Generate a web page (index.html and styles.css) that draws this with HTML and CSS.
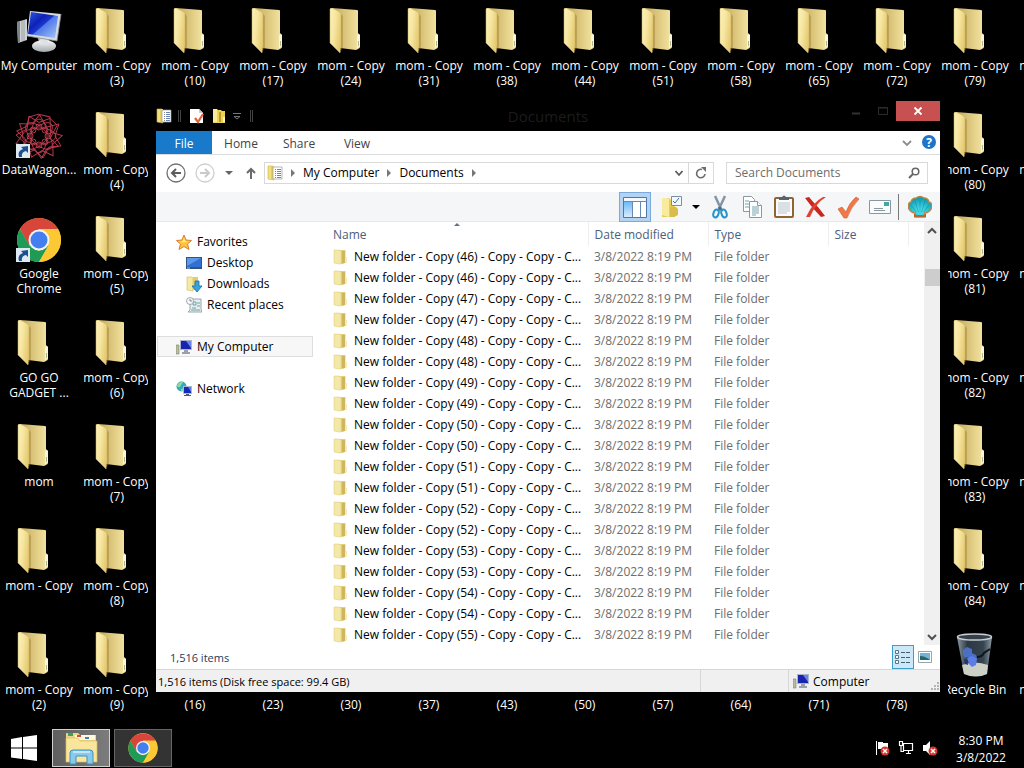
FILE: index.html
```html
<!DOCTYPE html>
<html lang="en">
<head>
  <meta charset="UTF-8">
  <meta name="viewport" content="width=device-width, initial-scale=1">
  <title>Documents</title>
  <link rel="stylesheet" href="styles.css">
</head>
<body>
  <!-- icon set -->
  <svg class="defs" width="0" height="0" aria-hidden="true">
    <defs>
      <linearGradient id="flap" x1="0" x2="1" y1="0" y2=".4"><stop offset="0" stop-color="#fbf1bd"/><stop offset=".5" stop-color="#f6e6a1"/><stop offset="1" stop-color="#e6cc74"/></linearGradient>
      <linearGradient id="back" x1="0" x2="1"><stop offset="0" stop-color="#c2a75a"/><stop offset=".5" stop-color="#dcc67c"/><stop offset="1" stop-color="#f5e6a6"/></linearGradient>
      <linearGradient id="screen" x1="0" x2="1" y1="0" y2="1"><stop offset="0" stop-color="#2f57dd"/><stop offset=".35" stop-color="#0e22b8"/><stop offset=".5" stop-color="#1c37cf"/><stop offset=".52" stop-color="#4f79e8"/><stop offset="1" stop-color="#a9c8fb"/></linearGradient>
      <linearGradient id="metal" x1="0" x2="0" y1="0" y2="1"><stop offset="0" stop-color="#fafafa"/><stop offset="1" stop-color="#a4a9ad"/></linearGradient>
      <linearGradient id="glass" x1="0" x2="1"><stop offset="0" stop-color="#8b99a4"/><stop offset=".3" stop-color="#2c3944"/><stop offset=".75" stop-color="#35434f"/><stop offset="1" stop-color="#8d9aa5"/></linearGradient>
      <linearGradient id="sky" x1="0" x2="0" y1="0" y2="1"><stop offset="0" stop-color="#6fb9f7"/><stop offset="1" stop-color="#d8edfd"/></linearGradient>
      <radialGradient id="shellfill" cx=".5" cy=".7" r=".6"><stop offset="0" stop-color="#55e8f5"/><stop offset="1" stop-color="#0f9fb5"/></radialGradient>
    </defs>

    <symbol id="folder" viewBox="0 0 48 48">
      <path d="M4 1q0-1 1-1l25 2q1 0 1 1v22l2 2v12q0 1-2 2l-2 1-16-2z" fill="url(#back)"/>
      <path d="M3 1q0-1 2-1l8 4q1 1 1 3v31l-1 7-10-10z" fill="url(#flap)" stroke="#cdb05c" stroke-width=".5"/>
      <path d="M14 6v32l-1 7 3-6V8z" fill="#8f6e27" opacity=".35"/>
      <path d="M31 26l2 1v11l-3 2V28z" fill="#fbf6d8"/><path d="M31 33h1v5h-1z" fill="#a8ba8a"/>
    </symbol>

    <symbol id="computer" viewBox="0 0 48 48">
      <path d="M2 14 12 11v21L3 35z" fill="#cfd2d3"/><path d="M2 14 5 13v21l-2 1z" fill="#7e8488"/>
      <path d="M7 13v20M9 12v21" stroke="#8f9599" stroke-width=".8"/>
      <path d="M22 28h13l-1 8h-9z" fill="#b7bbbe"/>
      <ellipse cx="29" cy="38" rx="12" ry="6" fill="url(#metal)"/><path d="M25 28h8v9h-7z" fill="#dfe2e3"/>
      <path d="M15 3 46 6 42 33 12 28z" fill="#d9dcde"/><path d="M46 6 42 33 12 28" fill="none" stroke="#878c90" stroke-width=".8"/>
      <path d="M16 4 43 8 40 30 13 26z" fill="url(#screen)"/>
    </symbol>

    <symbol id="spiro" viewBox="0 0 48 48">
      <g fill="none" stroke="#c03d50" stroke-width=".9">
        <path id="spoke" d="M24 2 32 15 44 12 40 24 46 34 34 35 28 46 20 38 8 42 9 30 1 23 12 17 14 5z"/>
        <use href="#spoke" transform="rotate(30 24 24)"/><use href="#spoke" transform="rotate(60 24 24) scale(.95) translate(1 1)"/>
        <ellipse cx="24" cy="24" rx="17" ry="8"/><ellipse cx="24" cy="24" rx="17" ry="8" transform="rotate(45 24 24)"/>
        <ellipse cx="24" cy="24" rx="17" ry="8" transform="rotate(90 24 24)"/><ellipse cx="24" cy="24" rx="17" ry="8" transform="rotate(135 24 24)"/>
        <circle cx="24" cy="15" r="3"/><circle cx="24" cy="33" r="3"/><circle cx="15" cy="24" r="3"/><circle cx="33" cy="24" r="3"/>
        <circle cx="18" cy="18" r="3"/><circle cx="30" cy="18" r="3"/><circle cx="18" cy="30" r="3"/><circle cx="30" cy="30" r="3"/>
      </g>
    </symbol>

    <symbol id="chrome" viewBox="0 0 48 48">
      <circle cx="24" cy="24" r="22" fill="#fcc934"/>
      <path d="M24 13h19a22 22 0 0 0-38 0l9 16z" fill="#d8453a"/>
      <path d="M5 13 14.500 29.500 24 35 33.500 29.500 24 46A22 22 0 0 1 5 13z" fill="#1e9b56"/>
      <path d="M43 13H24l9.500 16.500L24 46A22 22 0 0 0 43 13z" fill="#fcc934"/>
      <circle cx="24" cy="24" r="10.500" fill="#f4f4f4"/><circle cx="24" cy="24" r="8.500" fill="#447ff0"/>
    </symbol>

    <symbol id="shortcut" viewBox="0 0 14 14">
      <path d="M0 0h14v14H0z" fill="#dfe9f2"/><path d="M3 13Q1 7 7 5L5 3l7-1v7l-2-2Q5 8 6 13z" fill="#1c4f90"/>
    </symbol>

    <symbol id="bin" viewBox="0 0 48 48">
      <path d="M6 5h35l-5 37q-11 5-23 0z" fill="url(#glass)"/>
      <path d="M11 33q13-5 26 0l-1 9q-11 5-23 0z" fill="#cdd0c4"/>
      <path d="m12 18 4-3 5 2v4l4 2 1 4-5 1-4-3-3 1-2-3z" fill="#4a6fc4"/><path d="m16 26 5-2 5 3-1 6-4 2-3-3z" fill="#5c7ce6"/><path d="m13 27 3 1 1 5-3-1z" fill="#22366f"/>
      <path d="M26 25q5 0 7-4l6-4" fill="none" stroke="#0d151d" stroke-width="2"/>
      <ellipse cx="23.500" cy="5" rx="17" ry="3" fill="#34414b" stroke="#c7ced3" stroke-width="1.500"/>
    </symbol>

    <symbol id="mini-folder" viewBox="0 0 16 16">
      <path d="M6 1h6l1 1v6l1 1v4l-4 2H6z" fill="#e3d07a"/><path d="M9 2h3v12H9z" fill="#cdb65c"/>
      <path d="M1 1h5l2 1v13H6l-5-1z" fill="#f4e8a6" stroke="#dcca7c" stroke-width=".5"/><path d="M12 2h1v6l1 1v4l-2 1z" fill="#f6ecb2"/>
    </symbol>

    <symbol id="documents" viewBox="0 0 16 16">
      <path d="M1 1h5l1 1v13l-6-1z" fill="#f4e07a" stroke="#ccb04d" stroke-width=".6"/><path d="M4 1h3v13H4z" fill="#e5cc5e"/>
      <path d="M6 2h9v12H6z" fill="#fff" stroke="#9a9a9a" stroke-width=".7"/><path d="M8 4.500h1M8 6.500h1M8 8.500h1M8 10.500h1M8 12.500h1" stroke="#888"/><path d="M10 4.500h4M10 6.500h4M10 8.500h4M10 10.500h4M10 12.500h4" stroke="#6883b4"/>
    </symbol>

    <symbol id="props" viewBox="0 0 16 16">
      <path d="M1 1h9l4 4v10H1z" fill="#fff"/><path d="M10 1v4h4" fill="#ccc"/><path d="m6 10 3 4 5-8" fill="none" stroke="#e0623e" stroke-width="2.200"/>
    </symbol>

    <symbol id="new-folder" viewBox="0 0 16 16">
      <path d="M2 1h4l1 1h3l1 1h3v12H2z" fill="#ecd254"/><path d="M2 1h4v13H2z" fill="#f9eb97"/><path d="M8 4h2v10H8z" fill="#bf9a28"/><path d="M12 9h2v5h-2z" fill="#fff6c5"/>
    </symbol>

    <symbol id="star" viewBox="0 0 16 16"><path d="m8 1 2 5 5.500.5-4 3.500 1.500 5.500L8 12.500 3 15.500 4.500 10 .5 6.500 6 6z" fill="#fbc53c" stroke="#dd7e2c"/><path d="m8 4 1 3 3 .5-8 1L7 7z" fill="#fff0a8"/></symbol>

    <symbol id="desk" viewBox="0 0 16 16"><path d="M0 2h16v12H0z" fill="#33547e"/><path d="M1 3h14v9H1z" fill="#2f70d2"/><path d="M1 3h14L1 11z" fill="#5d98ea"/><path d="M1 13h3" stroke="#9cc5e8"/></symbol>

    <symbol id="download" viewBox="0 0 16 16"><path d="M1 1h5l1 1v13l-6-1z" fill="#f6e9a2" stroke="#d3bb5c" stroke-width=".6"/><path d="M7 1h5v13H7z" fill="#e2cd6c"/><path d="M9 5h4v5h3l-5 6-5-6h3z" fill="#35a4dc" stroke="#176a9e" stroke-width=".8"/></symbol>

    <symbol id="recent" viewBox="0 0 16 16"><path d="M4 2h11v10l1 3H2l2-2z" fill="#e9eef0" stroke="#86939b" stroke-width=".8"/><path d="M7 5h3v3H7zM11 6h3M11 9h3M6 11h4M5 13h9" fill="none" stroke="#599a9e" stroke-width=".9"/><circle cx="4" cy="4" r="3.500" fill="#f7f9fa" stroke="#8a979e" stroke-width=".8"/><path d="M4 2v2h2" fill="none" stroke="#5f7078" stroke-width=".8"/></symbol>

    <symbol id="pc" viewBox="0 0 16 16"><path d="M0 6h3v9H0z" fill="#b8bd9a" stroke="#7f8576" stroke-width=".6"/><path d="M4 1h12v10H4z" fill="#aab7cf"/><path d="M5 2h10v8H5z" fill="#1824ad"/><path d="M10 2h5v7z" fill="#6a86e6"/><path d="M8 11h4v2h2v2H6v-2h2z" fill="#9aa1ac"/></symbol>

    <symbol id="network" viewBox="0 0 16 16"><circle cx="5.500" cy="5.500" r="5" fill="#37a7c1"/><path d="M1 4q4-5 6-3L4 6q-3 1-3-2zM5 8l3-1v3H5z" fill="#86dc9c"/><path d="M7 5h9v8H7z" fill="#a9b9d6"/><path d="M8 6h7v6H8z" fill="#152bb8"/><path d="M12 6h3v5z" fill="#587fe6"/><path d="M10 13h3v1h2v1H8v-1h2z" fill="#4c5a78"/></symbol>

    <symbol id="cut" viewBox="0 0 24 24"><path d="M7 1 14 16M17 1 10 16" stroke="#8395a5" stroke-width="2.500"/><path d="m11 12 2 3" stroke="#4b6e8a" stroke-width="3"/><ellipse cx="8" cy="18.500" rx="2.500" ry="4" fill="none" stroke="#2593cb" stroke-width="2" transform="rotate(20 8 18.500)"/><ellipse cx="16" cy="18.500" rx="2.500" ry="4" fill="none" stroke="#2593cb" stroke-width="2" transform="rotate(-20 16 18.500)"/></symbol>

    <symbol id="copy" viewBox="0 0 24 24"><g fill="#fff" stroke="#8c989f"><path d="M3.500 1.500h8l3 3v12h-11z"/><path d="M9.500 6.500h8l4 4v12h-12z"/><path d="M17.500 6.500v4h4"/></g><path d="M5 6h4M5 9h4M5 12h4M12 12h7M12 14h7M12 16h7M12 18h7M12 20h4" stroke="#75a5ae"/></symbol>

    <symbol id="paste" viewBox="0 0 24 24"><rect x="2" y="2" width="20" height="21" rx="2" fill="#8e6537"/><path d="M4 4h16v17H4z" fill="#fbfcfc"/><path d="M6 8h12M6 10h12M6 12h12M6 14h12M6 16h12M6 18h9" stroke="#b9c5cb"/><path d="M7 2h3q2-3 4 0h3v3H7z" fill="#59636a"/></symbol>

    <symbol id="delete" viewBox="0 0 24 24"><path d="M1 3l4-1q4 5 9 10 4 5 7 9l-4 1Q9 14 1 3z" fill="#c9281d"/><path d="M22 2Q12 8 6 22H2Q9 7 19 2z" fill="#df4334"/></symbol>

    <symbol id="check" viewBox="0 0 24 24"><path d="m2 14 4-2 4 5Q13 8 20 2l3 2Q15 12 11 23H8z" fill="#ef7846" stroke="#cf5d36" stroke-width=".6"/></symbol>

    <symbol id="mail" viewBox="0 0 24 24"><path d="M1.500 5.500h21v13h-21z" fill="#fafbfb" stroke="#8a979e"/><path d="M16 7h5v4h-5z" fill="#42a7a5"/><path d="M6 13.500h9M6 15.500h11" stroke="#8a979e"/></symbol>

    <symbol id="shell" viewBox="0 0 24 24"><path d="M7 22v-4Q1 17 0 11q0-3 3-4 1-4 5-4 4-3 8 0 4 0 5 4 3 1 3 4-1 6-7 7v4z" fill="url(#shellfill)" stroke="#bd8544" stroke-width="1.500"/><path d="M12 19V5M11 19 7 6M13 19l4-13M9 18 3 10M15 18l6-8" stroke="#0b8496" fill="none" opacity=".5"/><path d="M6 19h12v3H6z" fill="#b5682f"/><path d="M8 17h8v3H8z" fill="#3fd5e4"/></symbol>

    <symbol id="pane" viewBox="0 0 24 24"><path d="M.5 2.500h23v20H.5z" fill="#fff" stroke="#4f78a8"/><path d="M1 3h22v3H1z" fill="#f4f9ff"/><path d="M1 6.500h22M9.500 7v15M17.500 7v15" stroke="#6789b3"/><path d="M1 7h8v15H1z" fill="url(#sky)"/></symbol>

    <symbol id="options" viewBox="0 0 24 24"><path d="M3 3h7l2 2h4v17H3z" fill="#e8cf52"/><path d="M3 3h5l2 1v18l-7-2z" fill="#f8ea9e"/><path d="M11 12h6l2 2v6l-4 2h-4z" fill="#d9bd4c"/><path d="M12.500 1.500h10v9h-10z" fill="#f5f9fd" stroke="#7d8d9c"/><path d="m14 6 2 2 4-5" fill="none" stroke="#3c6fa9"/></symbol>

    <symbol id="explorer" viewBox="0 0 36 36">
      <path d="M3 4q0-1 1-1h11l2 2h16v27H3z" fill="#eed587"/><path d="M5 3h5v3H5z" fill="#38a15c"/><path d="M12 5h20v5H12z" fill="#fff8dc"/><path d="M14 5h4v2h-4z" fill="#d74b32"/><path d="M22 7h4v2h-4z" fill="#3a84b8"/>
      <path d="M3 8h12l2 3h17v21H3z" fill="#f9e69c" stroke="#d9bb62" stroke-width=".7"/>
      <path d="M7 34V23q0-3 3-3h17q3 0 3 3v11h-6v-8H13v8z" fill="#88c9ee" stroke="#3e91c4"/><path d="M10 22h17" stroke="#d4f0ff" fill="none" stroke-width="1.500"/>
    </symbol>
  </svg>

  <main class="desktop" id="desktop"></main>

  <section class="window">
    <header class="titlebar">
      <div class="quick">
        <svg><use href="#documents"/></svg><i></i>
        <svg class="gap"><use href="#props"/></svg>
        <svg><use href="#new-folder"/></svg>
        <svg class="tiny" viewBox="0 0 8 8"><path d="M0 1.500h8M1 4.500h6L4 7z" fill="none" stroke="#777"/></svg><i></i>
      </div>
      <h1>Documents</h1>
      <div class="caption">
        <button aria-label="Minimize"><svg viewBox="0 0 12 12"><path d="M2 8.500h8" stroke="#333" stroke-width="2"/></svg></button>
        <button aria-label="Maximize"><svg viewBox="0 0 12 12"><path d="M1.500 2.500h9v7h-9zM1 3h10" fill="none" stroke="#2c2c2c"/></svg></button>
        <button class="close" aria-label="Close"><svg viewBox="0 0 12 12"><path d="m2.500 2.500 7 7m0-7-7 7" stroke="#fff" stroke-width="1.800"/></svg></button>
      </div>
    </header>

    <div class="content">
      <nav class="tabs">
        <button class="file">File</button>
        <button>Home</button>
        <button>Share</button>
        <button>View</button>
        <span class="grow"></span>
        <button class="plain" aria-label="Expand ribbon"><svg viewBox="0 0 10 10"><path d="m1 3 4 4 4-4" fill="none" stroke="#8c8c8c" stroke-width="1.800"/></svg></button>
        <button class="help" aria-label="Help">?</button>
      </nav>

      <div class="address-row">
        <button class="nav-btn" aria-label="Back"><svg viewBox="0 0 20 20"><circle cx="10" cy="10" r="9" fill="none" stroke="#6f6f6f" stroke-width="1.300"/><path d="M15 10H6m4-4-4 4 4 4" fill="none" stroke="#5d5d5d" stroke-width="2"/></svg></button>
        <button class="nav-btn" aria-label="Forward"><svg viewBox="0 0 20 20"><circle cx="10" cy="10" r="9" fill="none" stroke="#cfcfcf" stroke-width="1.300"/><path d="M5 10h9m-4-4 4 4-4 4" fill="none" stroke="#cacaca" stroke-width="2"/></svg></button>
        <button class="nav-small" aria-label="Recent locations"><svg viewBox="0 0 8 8"><path d="M0 2h8L4 6z" fill="#666"/></svg></button>
        <button class="nav-up" aria-label="Up"><svg viewBox="0 0 12 14"><path d="M6 13V3M2 7l4-4 4 4" fill="none" stroke="#6a6a6a" stroke-width="2"/></svg></button>
        <div class="address">
          <svg><use href="#documents"/></svg>
          <b></b><a href="#">My Computer</a>
          <b></b><a href="#">Documents</a>
          <b></b>
          <span class="grow"></span>
          <button class="plain" aria-label="Previous locations"><svg viewBox="0 0 10 10"><path d="m1.500 3 3.500 4 3.500-4" fill="none" stroke="#5a5a5a" stroke-width="1.800"/></svg></button>
          <button class="refresh" aria-label="Refresh"><svg viewBox="0 0 12 12"><path d="M10 7A4.200 4.200 0 1 1 7 2.500" fill="none" stroke="#6e6e6e" stroke-width="1.600"/><path d="M6 0h5v5z" fill="#6e6e6e"/></svg></button>
        </div>
        <div class="search">
          <input type="text" placeholder="Search Documents" aria-label="Search Documents">
          <svg viewBox="0 0 12 12"><circle cx="7.500" cy="4.500" r="3.300" fill="none" stroke="#666" stroke-width="1.500"/><path d="M5 7 1 11" stroke="#666" stroke-width="2"/></svg>
        </div>
      </div>

      <div class="toolbar">
        <button class="on" aria-label="Navigation pane"><svg><use href="#pane"/></svg></button>
        <button class="split" aria-label="Folder options"><svg><use href="#options"/></svg><em></em></button>
        <button aria-label="Cut"><svg><use href="#cut"/></svg></button>
        <button aria-label="Copy"><svg><use href="#copy"/></svg></button>
        <button aria-label="Paste"><svg><use href="#paste"/></svg></button>
        <button aria-label="Delete"><svg><use href="#delete"/></svg></button>
        <button aria-label="Properties"><svg><use href="#check"/></svg></button>
        <button aria-label="Email"><svg><use href="#mail"/></svg></button>
        <i></i>
        <button aria-label="Classic Shell settings"><svg><use href="#shell"/></svg></button>
      </div>

      <div class="panes">
        <nav class="tree">
          <a href="#"><svg><use href="#star"/></svg>Favorites</a>
          <a href="#" class="child"><svg><use href="#desk"/></svg>Desktop</a>
          <a href="#" class="child"><svg><use href="#download"/></svg>Downloads</a>
          <a href="#" class="child"><svg><use href="#recent"/></svg>Recent places</a>
          <a href="#" class="root selected"><svg><use href="#pc"/></svg>My Computer</a>
          <a href="#" class="root"><svg><use href="#network"/></svg>Network</a>
        </nav>
        <div class="list">
          <table>
            <colgroup><col class="c-name"><col class="c-date"><col class="c-type"><col class="c-size"><col></colgroup>
            <thead>
              <tr><th class="sorted">Name</th><th>Date modified</th><th>Type</th><th>Size</th><th></th></tr>
            </thead>
            <tbody id="rows"></tbody>
          </table>
        </div>
        <div class="scrollbar">
          <svg viewBox="0 0 10 10"><path d="m1 7 4-4 4 4" fill="none" stroke="#505050" stroke-width="2"/></svg>
          <div class="thumb"></div>
          <svg viewBox="0 0 10 10"><path d="m1 3 4 4 4-4" fill="none" stroke="#505050" stroke-width="2"/></svg>
        </div>
      </div>

      <div class="details">
        <span>1,516 items</span>
        <span class="grow"></span>
        <button class="on" aria-label="Details view"><svg viewBox="0 0 16 14"><path d="M.5.500h3v3h-3zM.5 5.500h3v3h-3zM.5 10.500h3v3h-3z" fill="#fff" stroke="#57768a"/><path d="M6 2.500h4M11 2.500h4M6 7.500h4M11 7.500h4M6 12.500h4M11 12.500h4" stroke="#44606f"/></svg></button>
        <button aria-label="Thumbnail view"><svg viewBox="0 0 14 14"><path d="M.5 1.500h13v11H.5z" fill="#fff" stroke="#98a5ad"/><path d="M2 3h10v7H2z" fill="#6fb5d8"/><path d="M2 6q5 0 10 4H2z" fill="#27646b"/></svg></button>
      </div>

      <footer class="status">
        <span class="grow total">1,516 items (Disk free space: 99.4 GB)</span>
        <span class="cell"></span>
        <span class="where"><svg><use href="#pc"/></svg>Computer</span>
        <svg class="grip" viewBox="0 0 10 10"><path d="M7 1h2M4 4h2M7 4h2M1 7h2M4 7h2M7 7h2" stroke="#b4b4b4" stroke-width="2"/></svg>
      </footer>
    </div>
  </section>

  <footer class="taskbar">
    <button class="start" aria-label="Start"><svg viewBox="0 0 26 26"><path d="M0 4 11 2v10.500H0zM12 2 26 0v12.500H12zM0 13.500h11V24L0 22.500zM12 13.500h14V26l-14-2z" fill="#fff"/></svg></button>
    <button class="task active" aria-label="File Explorer"><svg><use href="#explorer"/></svg></button>
    <button class="task" aria-label="Google Chrome"><svg class="round"><use href="#chrome"/></svg></button>
    <span class="grow"></span>
    <div class="tray">
      <svg viewBox="0 0 16 16"><path d="M2 1h1v14H2zM4 2h5v1h5v7H9V9H4z" fill="#fff"/><circle cx="11" cy="11" r="4.500" fill="#d8352e"/><path d="m9 9 4 4m0-4-4 4" stroke="#fff" stroke-width="1.500"/></svg>
      <svg viewBox="0 0 16 16"><path d="M5.500 3.500h9v7h-9zM8 13.500h5M10.500 11v2M1.500 1.500h3v4h-3zM3 6v5.500h3" fill="none" stroke="#fff" stroke-width="1.200"/></svg>
      <svg viewBox="0 0 16 16"><path d="M1 5h3l4-4v14l-4-4H1z" fill="#fff"/><circle cx="11" cy="11" r="4.500" fill="#d8352e"/><path d="m9 9 4 4m0-4-4 4" stroke="#fff" stroke-width="1.500"/></svg>
    </div>
    <time class="clock">8:30 PM<br>3/8/2022</time>
  </footer>

  <script>
    // desktop fills top to bottom, seven items per column
    const items = [
      ['computer', 'My Computer'],
      ['spiro', 'DataWagon...', true],
      ['chrome', 'Google Chrome', true],
      ['folder', 'GO GO GADGET ...'],
      ['folder', 'mom'],
      ['folder', 'mom - Copy']
    ];
    for (let i = 2; i <= 91; i++) {
      if (i === 41) items.push(['folder', 'New folder']);
      if (i === 85) items.push(['bin', 'Recycle Bin']);
      items.push(['folder', `mom - Copy (${i})`]);
    }

    // slots fully behind the window stay empty
    const covered = i => {
      const col = Math.floor(i / 7), row = i % 7;
      return col > 1 && col < 12 && row > 0 && row < 6;
    };
    document.getElementById('desktop').innerHTML = items.map(([icon, label, link], i) => covered(i) ? '<span></span>' : `
      <a href="#" class="item">
        <span class="pic"><svg><use href="#${icon}"/></svg>${link ? '<svg class="link"><use href="#shortcut"/></svg>' : ''}</span>
        <span class="label">${label}</span>
      </a>`).join('');

    const nums = [46, 46, 47, 47, 48, 48, 49, 49, 50, 50, 51, 51, 52, 52, 53, 53, 54, 54, 55];
    document.getElementById('rows').innerHTML = nums.map(n => `
      <tr>
        <td><svg><use href="#mini-folder"/></svg>New folder - Copy (${n}) - Copy - Copy - C...</td>
        <td>3/8/2022 8:19 PM</td><td>File folder</td><td></td><td></td>
      </tr>`).join('');
  </script>
</body>
</html>
```

FILE: styles.css
```css
* { box-sizing: border-box; }
body { margin: 0; height: 100vh; overflow: hidden; display: flex; flex-direction: column; background: #000; font-family: "Open Sans", "Noto Sans", sans-serif; font-size: 12px; color: #000; }
a { color: inherit; text-decoration: none; }
button { font: inherit; color: inherit; background: none; border: 0; padding: 0; margin: 0; display: flex; align-items: center; justify-content: center; }
svg { flex: none; width: 16px; height: 16px; display: block; }
.defs { position: absolute; width: 0; height: 0; }
.grow { flex: 1; }

/* desktop */
.desktop { flex: 1; min-height: 0; display: grid; grid-auto-flow: column; grid-template-rows: repeat(7, 104px); grid-auto-columns: 78px; overflow: hidden; color: #fff; }
.item { padding-top: 8px; display: flex; flex-direction: column; align-items: center; }
.pic { position: relative; }
.pic svg { width: 48px; height: 48px; }
.pic .link { position: absolute; left: 1px; bottom: 2px; width: 14px; height: 14px; }
.label { margin-top: 2px; width: 78px; line-height: 15px; text-align: center; }

/* window */
.window { position: absolute; left: 148px; right: 76px; top: 100px; bottom: 68px; padding: 0 8px 8px; background: #000; display: flex; flex-direction: column; }
.titlebar { height: 31px; flex: none; display: grid; grid-template-columns: 1fr auto 1fr; align-items: center; }
.titlebar h1 { margin: 0; font-size: 15px; font-weight: normal; color: #1c1c1c; }
.quick { display: flex; align-items: center; gap: 6px; }
.quick i { width: 3px; height: 12px; border: solid #444; border-width: 0 1px; }
.quick .gap { margin-left: 2px; }
.quick .tiny { width: 8px; height: 8px; margin-right: 3px; }
.caption { display: flex; justify-content: flex-end; align-self: start; padding-top: 1px; }
.caption button { width: 27px; height: 20px; }
.caption svg { width: 12px; height: 12px; }
.caption .close { width: 44px; background: #c75050; }

.content { flex: 1; min-height: 0; background: #fff; display: flex; flex-direction: column; }
.tabs { height: 24px; flex: none; display: flex; border-bottom: 1px solid #dadbdc; color: #444; }
.tabs button { width: 58px; padding-top: 2px; }
.tabs .file { width: 56px; background: #1979ca; color: #fff; }
.plain svg { width: 10px; height: 10px; }
.tabs .plain { width: 24px; padding: 0; }
.tabs .help { width: 14px; height: 14px; margin: 4px 4px 0 3px; padding: 0; border-radius: 7px; background: #1e74c8; color: #fff; font-weight: bold; }

.address-row { height: 37px; flex: none; display: flex; align-items: center; padding: 0 12px 2px 10px; }
.nav-btn { width: 20px; margin-right: 9px; }
.nav-btn svg { width: 20px; height: 20px; }
.nav-small { width: 8px; margin-left: 1px; }
.nav-small svg { width: 8px; height: 8px; }
.nav-up { width: 12px; margin: 0 7px 0 12px; }
.nav-up svg { width: 12px; height: 14px; }
.address { flex: 1; height: 22px; display: flex; align-items: center; border: 1px solid #d9d9d9; padding-left: 2px; }
.address b { border: 4px solid transparent; border-left-color: #777; border-right: 0; margin: 0 8px; }
.address .plain { width: 18px; height: 20px; }
.refresh { width: 25px; height: 20px; border-left: 1px solid #d9d9d9; }
.refresh svg { width: 12px; height: 12px; }
.search { width: 202px; height: 22px; margin-left: 12px; padding: 0 7px 0 8px; border: 1px solid #d9d9d9; display: flex; align-items: center; }
.search input { flex: 1; min-width: 0; border: 0; padding: 0; outline: 0; font: inherit; background: none; }
.search input::placeholder { color: #6d6d6d; opacity: 1; }
.search svg { width: 12px; height: 12px; }

.toolbar { height: 30px; flex: none; display: flex; justify-content: flex-end; align-items: center; padding-right: 4px; background: #f5f6f7; border-bottom: 1px solid #e4e9ee; }
.toolbar button { width: 32px; height: 30px; }
.toolbar svg { width: 24px; height: 24px; }
.toolbar .on { background: #b4d3f3; border: 1px solid #7aa9dc; }
.toolbar .split { width: 53px; gap: 9px; padding-left: 4px; }
.toolbar em { border: 4px solid transparent; border-top-color: #000; border-bottom: 0; }
.toolbar i { width: 1px; height: 26px; margin: 0 5px 0 2px; background: #777; }

.panes { flex: 1; min-height: 0; display: flex; }
.tree { width: 170px; padding: 9px 13px 0 1px; }
.tree a { height: 21px; padding-left: 19px; display: flex; align-items: center; gap: 5px; }
.tree .child { padding-left: 29px; }
.tree .root { margin-top: 21px; }
.tree .selected { padding-left: 18px; background: #f7f7f7; border: 1px solid #dedede; }

.list { flex: 1; min-width: 0; overflow: hidden; }
table { width: 100%; table-layout: fixed; border-collapse: collapse; }
.c-name { width: 262px; }
.c-date, .c-type { width: 120px; }
.c-size { width: 80px; }
th { position: relative; height: 24px; padding: 0 6px; border-right: 1px solid #eceef0; text-align: left; font-weight: normal; color: #4c607a; }
th:last-child { border: 0; }
.sorted { padding-left: 7px; }
.sorted::before { content: ""; position: absolute; top: 1px; left: 49%; border: 3px solid transparent; border-bottom-color: #5a7486; border-top: 0; }
td { height: 21px; padding: 0 6px; line-height: 20px; white-space: nowrap; color: #6d6d6d; }
td:first-child { padding-left: 7px; color: #000; }
td svg { float: left; margin: 2px 5px 0 0; }
.scrollbar { width: 16px; background: #f0f0f0; display: flex; flex-direction: column; align-items: center; }
.scrollbar svg { width: 10px; height: 10px; margin: 4px 0 3px; }
.thumb { width: 15px; height: 17px; margin: 30px 0 auto; background: #cdcdcd; }

.details { height: 24px; flex: none; display: flex; align-items: center; padding: 0 4px 0 14px; font-size: 11px; color: #1e395b; }
.details button { width: 22px; height: 24px; }
.details .on { background: #cce8f8; border: 1px solid #3c9fcb; }
.details svg { width: 14px; height: 14px; }
.details .on svg { width: 16px; }

.status { height: 23px; flex: none; display: flex; align-items: center; padding-left: 2px; background: #f0f0f0; border-top: 1px solid #d7d7d7; }
.total { font-size: 11px; }
.cell { width: 88px; height: 22px; border-left: 1px solid #d7d7d7; }
.where { width: 142px; height: 22px; padding-left: 4px; display: flex; align-items: center; gap: 4px; border-left: 1px solid #d7d7d7; }
.grip { width: 10px; height: 10px; align-self: flex-end; }

/* taskbar */
.taskbar { height: 40px; flex: none; display: flex; align-items: center; color: #fff; }
.start { width: 48px; height: 40px; }
.start svg { width: 26px; height: 26px; }
.task { width: 58px; height: 38px; margin-left: 4px; background: #333; border: 1px solid #666; }
.task.active { background: linear-gradient(to right, #5f5f5f, #7c7c7c); border-color: #d0d0d0; }
.task svg { width: 36px; height: 36px; }
.task .round { width: 32px; height: 32px; }
.tray { display: flex; gap: 8px; }
.clock { width: 86px; padding-top: 2px; line-height: 17px; text-align: center; }
```
